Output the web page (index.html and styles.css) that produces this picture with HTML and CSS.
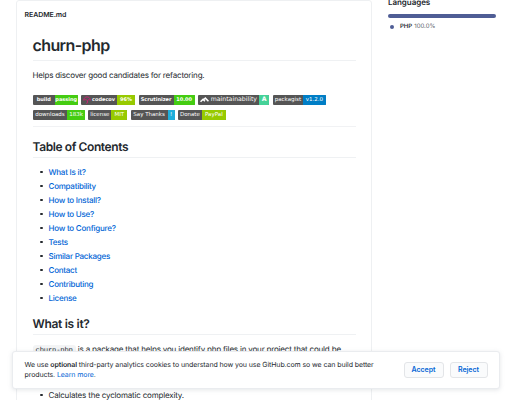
FILE: index.html
```html
<!DOCTYPE html>
<html lang="en">
<head>
<meta charset="utf-8">
<title>churn-php</title>
<link rel="stylesheet" href="styles.css">
</head>
<body>
<div class="page">
  <main class="readme">
    <div class="filename">README.md</div>
    <article>
      <h1>churn-php</h1>
      <p class="lead">Helps discover good candidates for refactoring.</p>
      <div class="badges">
        <div class="row">
          <span class="badge w-build bold"><span>build</span><b class="green">passing</b></span>
          <span class="badge w-codecov bold"><span><svg class="umbrella" viewBox="0 0 8 8"><path d="M.7 4.2C.7-.2 7.3-.2 7.3 4.2 6.2 3.4 5.3 3.6 4.5 4.3V6.8Q3.8 8 3 6.8M4 4.3C3 3.4 1.8 3.4.7 4.2" fill="none" stroke="#c42573" stroke-width="1"/></svg>codecov</span><b class="lime">96%</b></span>
          <span class="badge w-scrut bold"><span>Scrutinizer</span><b class="green">10.00</b></span>
          <span class="badge w-maint"><span><svg class="climate" viewBox="0 0 10 6"><path d="M.6 5 3.4 2.2 5.5 4.3M4.3 2.4 5.9.9 9.4 4.4" fill="none" stroke="#fff" stroke-width="1.7"/></svg>maintainability</span><b class="teal">A</b></span>
          <span class="badge w-pack"><span>packagist</span><b class="blue">v1.2.0</b></span>
        </div>
        <div class="row">
          <span class="badge w-down"><span>downloads</span><b class="green">183k</b></span>
          <span class="badge w-lic"><span>license</span><b class="lime">MIT</b></span>
          <span class="badge w-thanks"><span>Say Thanks</span><b class="cyan">!</b></span>
          <span class="badge w-donate"><span>Donate</span><b class="lime">PayPal</b></span>
        </div>
      </div>
      <h2>Table of Contents</h2>
      <ul class="toc">
        <li><a>What Is it?</a></li>
        <li><a>Compatibility</a></li>
        <li><a>How to Install?</a></li>
        <li><a>How to Use?</a></li>
        <li><a>How to Configure?</a></li>
        <li><a>Tests</a></li>
        <li><a>Similar Packages</a></li>
        <li><a>Contact</a></li>
        <li><a>Contributing</a></li>
        <li><a>License</a></li>
      </ul>
      <h2 class="what">What is it?</h2>
      <p class="about"><code>churn-php</code> is a package that helps you identify php files in your project that could be</p>
      <ul class="steps"><li>Calculates the cyclomatic complexity.</li></ul>
    </article>
  </main>
  <aside class="languages">
    <h3>Languages</h3>
    <div class="bar"></div>
    <div class="lang"><i></i><strong>PHP</strong><span>100.0%</span></div>
  </aside>
</div>
<div class="cookies">
  <p>We use <strong>optional</strong> third-party analytics cookies to understand how you use GitHub.com so we can build better<br>products. <a>Learn more</a>.</p>
  <button>Accept</button>
  <button class="reject">Reject</button>
</div>
</body>
</html>
```
FILE: styles.css
```css
* { box-sizing: border-box; }
body {
  margin: 0;
  height: 400px;
  overflow: hidden;
  background: #fff;
  color: #24292e;
  font: 8px/12px Inter, "Liberation Sans", sans-serif;
  letter-spacing: -.18px;
  text-rendering: geometricPrecision;
}
h1, h2, h3, p, ul { margin: 0; padding: 0; }
a { color: #0366d6; }
.page { display: flex; align-items: flex-start; padding-left: 16px; }
.readme {
  width: 356px;
  height: 420px;
  padding: 9px 15px 0 7.5px;
  border: 1px solid #eef0f2;
  border-radius: 3px;
}
.filename { font-size: 7px; line-height: 10px; font-weight: 600; letter-spacing: -.08px; }
article { padding: 15px 0 0 8px; }
h1 {
  height: 26px;
  font-size: 16px;
  line-height: 20px;
  font-weight: 600;
  letter-spacing: -.6px;
  border-bottom: 1px solid #eff1f3;
}
.lead { margin-top: 8px; }
.badges { margin-top: 14px; height: 32px; border-bottom: 1px solid #f1f2f4; }
.row { display: flex; height: 15px; padding-left: .5px; }
.badge {
  display: flex;
  height: 9.5px;
  margin-right: 3.3px;
  border-radius: 1px;
  overflow: hidden;
  background: #555;
  color: #fff;
  font: 5.5px/10.5px "DejaVu Sans", sans-serif;
  letter-spacing: 0;
  white-space: nowrap;
}
.badge span { flex: 1; display: flex; align-items: center; justify-content: center; }
.badge b { display: block; text-align: center; font-weight: 400; }
.badge.bold { font-weight: 700; font-size: 5px; }
.badge.bold b { font-weight: 700; }
.green { background: #44cc11; }
.lime { background: #97ca00; }
.teal { background: #45d298; }
.blue { background: #007ec6; }
.cyan { background: #1eaedb; }
.w-build { width: 45px; }
.w-build b { width: 23.5px; }
.w-codecov { width: 54px; }
.w-codecov b { width: 18.5px; }
.w-scrut { width: 56px; }
.w-scrut b { width: 21px; }
.w-maint { width: 71.5px; font-size: 6.2px; }
.w-maint .teal { width: 10.5px; font-weight: 700; }
.w-pack { width: 53px; }
.w-pack b { width: 22.5px; }
.w-down { width: 52px; }
.w-down b { width: 18px; }
.w-lic { width: 39px; }
.w-lic b { width: 16px; }
.w-thanks { width: 44px; }
.w-thanks b { width: 7px; }
.w-donate { width: 48px; }
.w-donate b { width: 24px; }
.umbrella { width: 8px; height: 8px; margin-right: 1px; }
.climate { width: 9px; height: 6px; margin-right: 2px; }
h2 {
  height: 19px;
  margin-top: 12px;
  font-size: 12px;
  line-height: 15px;
  font-weight: 600;
  letter-spacing: -.4px;
  border-bottom: 1px solid #eff1f3;
}
ul { list-style: none; }
.toc { margin-top: 7px; font-weight: 500; }
li { position: relative; height: 14px; line-height: 14px; padding-left: 16px; }
.toc li { letter-spacing: -.24px; }
li::before {
  content: "";
  position: absolute;
  left: 7.5px;
  top: 5.5px;
  width: 2.6px;
  height: 2.6px;
  border-radius: 50%;
  background: #24292e;
}
h2.what { margin-top: 11px; letter-spacing: -.3px; }
.about { margin-top: 8px; height: 24px; white-space: nowrap; }
code {
  padding: 1.5px 3px;
  border-radius: 3px;
  background: #f3f4f5;
  font: 7.2px/10px "Liberation Mono", monospace;
  vertical-align: 1px;
}
.steps { margin-top: 21px; }
.languages { width: 108px; margin-left: 16px; }
h3 { margin-top: -4px; font-size: 8px; line-height: 12px; font-weight: 600; letter-spacing: -.05px; }
.bar { height: 4px; margin-top: 6px; border-radius: 3px; background: #4f5d95; }
.lang { display: flex; align-items: center; height: 10px; margin-top: 4px; font-size: 6px; letter-spacing: 0; }
.lang i { width: 4px; height: 4px; margin: 0 6px 0 2px; border-radius: 50%; background: #4f5d95; }
.lang strong { font-weight: 600; margin-right: 2px; }
.lang span { color: #586069; }
.cookies {
  position: absolute;
  left: 12px;
  top: 351px;
  width: 488px;
  height: 38px;
  display: flex;
  align-items: center;
  padding: 0 11.5px;
  border: 1px solid #eaecef;
  border-radius: 3px;
  background: #fff;
  box-shadow: 0 1px 4px rgba(149, 157, 165, .25);
}
.cookies p { flex: 1; font-size: 7px; line-height: 10.5px; letter-spacing: -.09px; white-space: nowrap; }
.cookies strong { font-weight: 600; }
button {
  width: 40px;
  height: 16px;
  margin-left: 6px;
  padding: 0;
  border: 1px solid #e3e5e8;
  border-radius: 3px;
  background: #fafbfc;
  color: #0366d6;
  font: 600 7px/12px Inter, "Liberation Sans", sans-serif;
}
.reject { width: 38px; }
```
